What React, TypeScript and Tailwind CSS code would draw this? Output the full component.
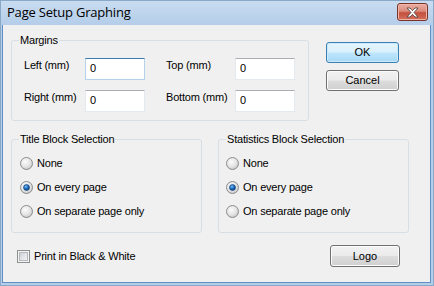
import React from 'react';

const ui = '"Liberation Sans", Arial, sans-serif';

function Radio({ checked, label }: { checked?: boolean; label: string }) {
  return (
    <div className="flex items-center h-[13px]">
      <svg width="13" height="13" viewBox="0 0 13 13" className="shrink-0">
        <defs>
          <radialGradient id="rbg" cx="0.4" cy="0.35" r="0.7">
            <stop offset="0" stopColor="#fbfbfb" />
            <stop offset="0.6" stopColor="#e4e4e4" />
            <stop offset="1" stopColor="#c4c4c4" />
          </radialGradient>
          <radialGradient id="rdot" cx="0.4" cy="0.35" r="0.7">
            <stop offset="0" stopColor="#7cc4f8" />
            <stop offset="0.5" stopColor="#1f6bbd" />
            <stop offset="1" stopColor="#0c3d78" />
          </radialGradient>
        </defs>
        <circle cx="6.5" cy="6.5" r="6" fill="url(#rbg)" stroke="#8a8c8e" strokeWidth="1" />
        {checked && <circle cx="6.5" cy="6.5" r="3" fill="url(#rdot)" stroke="#0f3f78" strokeWidth="0.6" />}
      </svg>
      <span className="ml-[4px] text-[11px] leading-[13px] tracking-[-0.2px] text-black">{label}</span>
    </div>
  );
}

function GroupBox({ title, className, children }: { title: string; className: string; children: React.ReactNode }) {
  return (
    <div className={`relative border border-[#d5dfe5] rounded-[3px] ${className}`}>
      <span className="absolute -top-[7px] left-[7px] px-[1px] bg-[#f0f0f0] text-[11px] leading-[13px] tracking-[-0.2px] text-black">
        {title}
      </span>
      {children}
    </div>
  );
}

function Field({ focused }: { focused?: boolean }) {
  return (
    <div
      className={`w-[60px] h-[22px] bg-white border pl-[4px] pt-[3px] text-[11px] leading-[13px] text-black ${
        focused
          ? 'border-[#b5d2ec] border-t-[#3d7bad]'
          : 'border-[#e3e9ef] border-t-[#abadb3]'
      }`}
    >
      0
    </div>
  );
}

function Button({ label, primary, className }: { label: string; primary?: boolean; className: string }) {
  return (
    <div
      className={`flex items-center justify-center rounded-[3px] border text-[11px] leading-[13px] text-black ${className} ${
        primary
          ? 'border-[#3c7fb1] bg-[linear-gradient(to_bottom,#e5f5fd_0%,#d9f0fc_48%,#bee6fd_52%,#a7d9f5_100%)] shadow-[inset_0_0_0_1px_#cbeafb]'
          : 'border-[#707070] bg-[linear-gradient(to_bottom,#f2f2f2_0%,#ebebeb_48%,#dddddd_52%,#cfcfcf_100%)] shadow-[inset_0_0_0_1px_#fcfcfc]'
      }`}
    >
      {label}
    </div>
  );
}

const label = 'text-[11px] leading-[13px] tracking-[-0.2px] pt-[1px]';

export default function App() {
  return (
    <div
      className="w-[434px] h-[286px] flex flex-col bg-[#b4cde9] border border-[#8aa8c8]"
      style={{ fontFamily: ui }}
    >
      {/* title bar */}
      <div className="h-[24px] flex items-center justify-between pl-[6px] pr-[5px] bg-[linear-gradient(to_bottom,#c9dcf1,#b4cde9)]">
        <span className="text-[13px] text-black tracking-[-0.2px]" style={{ fontFamily: '"Open Sans", "Liberation Sans", sans-serif' }}>
          Page Setup Graphing
        </span>
        <div className="w-[31px] h-[18px] mt-[-2px] flex items-center justify-center rounded-[3px] border border-[#7a3328] bg-[linear-gradient(to_bottom,#eab0a4_0%,#da8a7b_45%,#c4503c_55%,#d2705d_100%)] shadow-[inset_0_0_0_1px_#f0b5a6]">
          <svg width="13" height="11" viewBox="0 0 13 11">
            <path
              d="M1 1h3l2.5 2.7L9 1h3L8 5.5 12 10H9L6.5 7.3 4 10H1l4-4.5z"
              fill="#ffffff"
              stroke="#5a4a48"
              strokeWidth="0.9"
              strokeLinejoin="round"
            />
          </svg>
        </div>
      </div>

      {/* client */}
      <div className="flex-1 ml-[1px] mr-[2px] mb-[2px] bg-[#f0f0f0] border border-t-0 border-[#5f8fc4] flex flex-col">
        <div className="flex mt-[15px]">
          <GroupBox title="Margins" className="ml-[8px] w-[298px] h-[81px]">
            <div className="grid grid-cols-[61px_60px_21px_69px_60px] gap-y-[10px] pl-[12px] pt-[17px]">
              <span className={label}>Left (mm)</span>
              <Field focused />
              <span />
              <span className={label}>Top (mm)</span>
              <Field />
              <span className={label}>Right (mm)</span>
              <Field />
              <span />
              <span className={label}>Bottom (mm)</span>
              <Field />
            </div>
          </GroupBox>
          <div className="ml-[17px] mt-[2px] flex flex-col gap-[7px]">
            <Button label="OK" primary className="w-[73px] h-[21px]" />
            <Button label="Cancel" className="w-[73px] h-[21px]" />
          </div>
        </div>

        <div className="flex mt-[18px] ml-[8px] gap-[16px]">
          <GroupBox title="Title Block Selection" className="w-[191px] h-[94px]">
            <div className="flex flex-col gap-[11px] pl-[8px] pt-[17px]">
              <Radio label="None" />
              <Radio label="On every page" checked />
              <Radio label="On separate page only" />
            </div>
          </GroupBox>
          <GroupBox title="Statistics Block Selection" className="w-[191px] h-[94px]">
            <div className="flex flex-col gap-[11px] pl-[7px] pt-[17px]">
              <Radio label="None" />
              <Radio label="On every page" checked />
              <Radio label="On separate page only" />
            </div>
          </GroupBox>
        </div>

        <div className="flex items-center justify-between mt-[12px] pl-[14px] pr-[30px]">
          <div className="flex items-center">
            <svg width="13" height="13" viewBox="0 0 13 13">
              <defs>
                <linearGradient id="cb" x1="0" y1="0" x2="1" y2="1">
                  <stop offset="0" stopColor="#cbcfd5" />
                  <stop offset="1" stopColor="#f6f6f6" />
                </linearGradient>
              </defs>
              <rect x="0.5" y="0.5" width="12" height="12" fill="#f4f4f4" stroke="#8e8f8f" />
              <rect x="2.5" y="2.5" width="8" height="8" fill="url(#cb)" stroke="#b5b9be" />
            </svg>
            <span className="ml-[4px] text-[11px] leading-[13px] tracking-[-0.2px] text-black">Print in Black &amp; White</span>
          </div>
          <Button label="Logo" className="w-[70px] h-[22px]" />
        </div>
      </div>
    </div>
  );
}
